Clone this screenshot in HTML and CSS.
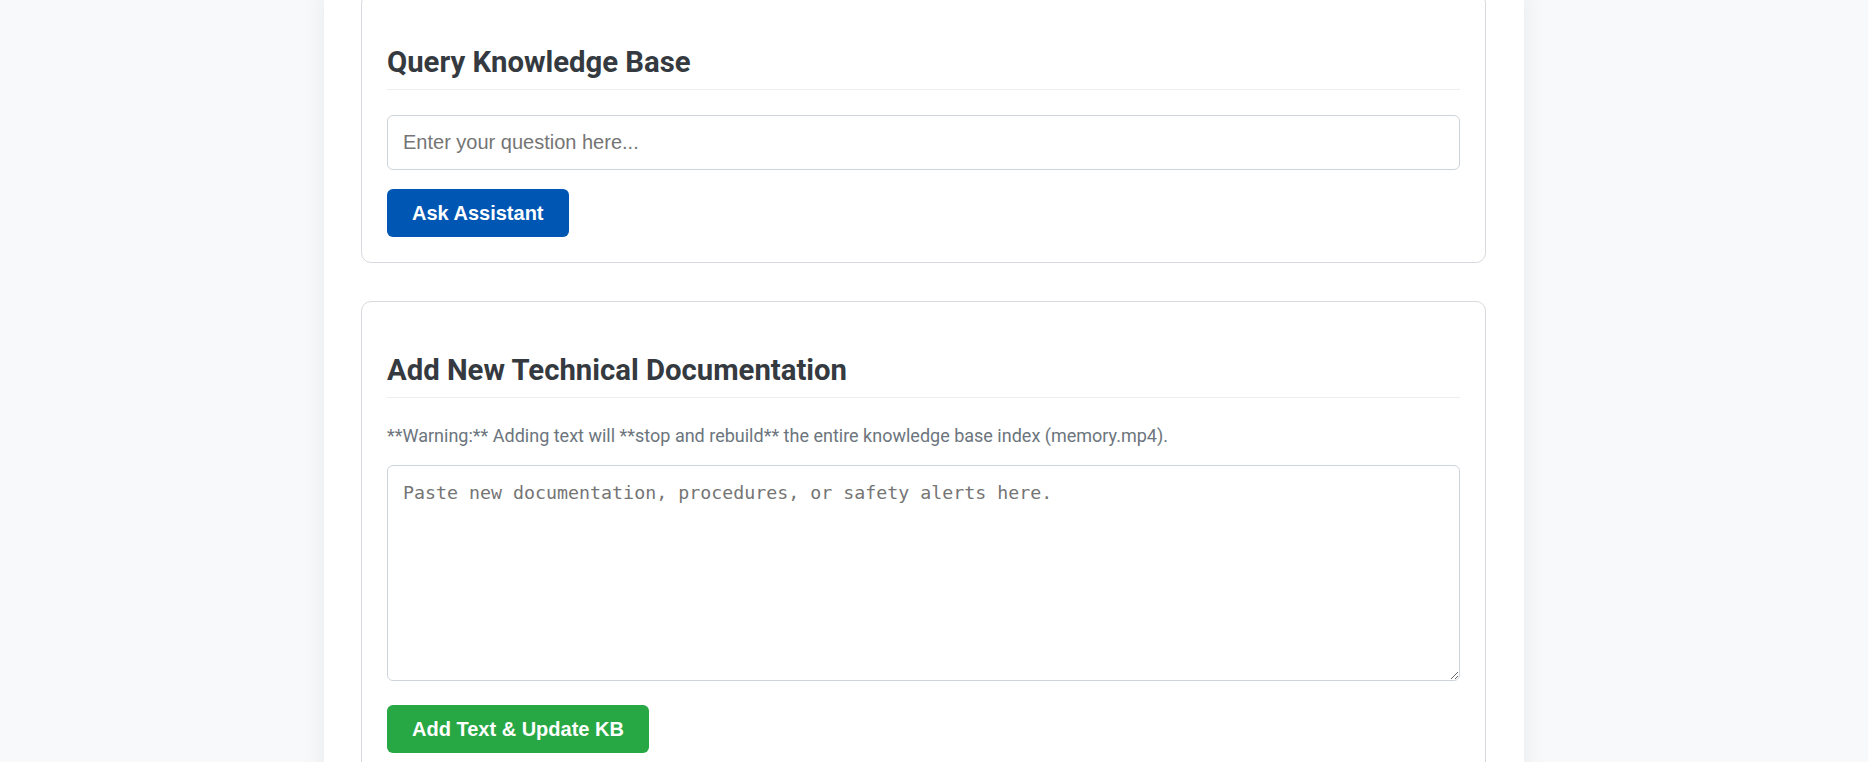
FILE: index.html
```html
<!DOCTYPE html>
<html lang="en">
<head>
<meta charset="utf-8">
<title>Technical Knowledge Assistant</title>
<link rel="stylesheet" href="styles.css">
</head>
<body>
<main class="container">
  <section class="card">
    <h2 class="card-title">Query Knowledge Base</h2>
    <input class="text-input" type="text" placeholder="Enter your question here...">
    <button class="btn btn-primary" type="button">Ask Assistant</button>
  </section>
  <section class="card">
    <h2 class="card-title">Add New Technical Documentation</h2>
    <p class="note">**Warning:** Adding text will **stop and rebuild** the entire knowledge base index (memory.mp4).</p>
    <textarea class="text-area" placeholder="Paste new documentation, procedures, or safety alerts here."></textarea>
    <button class="btn btn-success btn-spaced" type="button">Add Text &amp; Update KB</button>
  </section>
</main>
</body>
</html>
```
FILE: styles.css
```css
html, body {
  margin: 0;
  background: #f8f9fa;
}
body {
  padding-right: 20px;
  font-family: Roboto, "Liberation Sans", sans-serif;
  color: #343a40;
  overflow: hidden;
}
.container {
  width: 1200px;
  box-sizing: border-box;
  margin: -7px auto 0;
  padding: 0 38px 40px 37px;
  background: #ffffff;
  box-shadow: 0 0 22px rgba(0, 0, 0, 0.07);
  display: flex;
  flex-direction: column;
  gap: 38px;
  min-height: 820px;
}
.card {
  display: flex;
  flex-direction: column;
  align-items: flex-start;
  border: 1px solid #d6d9dd;
  border-radius: 10px;
  padding: 25px;
  background: #ffffff;
}
.card-title {
  align-self: stretch;
  margin: 0 0 25px;
  padding: 23px 0 7px;
  font-family: Roboto, sans-serif;
  font-size: 29.3px;
  font-weight: 700;
  line-height: 40px;
  color: #343a40;
  border-bottom: 1px solid #eceef0;
}
.note {
  margin: 0 0 17px;
  font-family: Roboto, sans-serif;
  font-size: 18px;
  line-height: 25px;
  color: #6c757d;
}
.text-input {
  align-self: stretch;
  box-sizing: border-box;
  height: 55px;
  margin: 0 0 19px;
  padding: 15px;
  border: 1px solid #ced4da;
  border-radius: 6px;
  font-family: "Liberation Sans", Arial, sans-serif;
  font-size: 20px;
  line-height: 23px;
  color: #212529;
  background: #fff;
  outline: none;
}
.text-input::placeholder {
  color: #757575;
}
.text-area {
  align-self: stretch;
  box-sizing: border-box;
  height: 216px;
  margin: 0 0 24px;
  padding: 16px 15px 15px;
  border: 1px solid #ced4da;
  border-radius: 6px;
  font-family: "DejaVu Sans Mono", "Liberation Mono", monospace;
  font-size: 18.3px;
  color: #212529;
  background: #fff;
  outline: none;
}
.text-area::placeholder {
  color: #757575;
}
.btn {
  border: none;
  border-radius: 6px;
  padding: 12px 25px;
  font-family: "Liberation Sans", Arial, sans-serif;
  font-size: 20px;
  font-weight: 700;
  line-height: 24px;
  color: #ffffff;
  cursor: pointer;
}
.btn-primary {
  background: #0056b3;
}
.btn-success {
  background: #28a745;
}
```
